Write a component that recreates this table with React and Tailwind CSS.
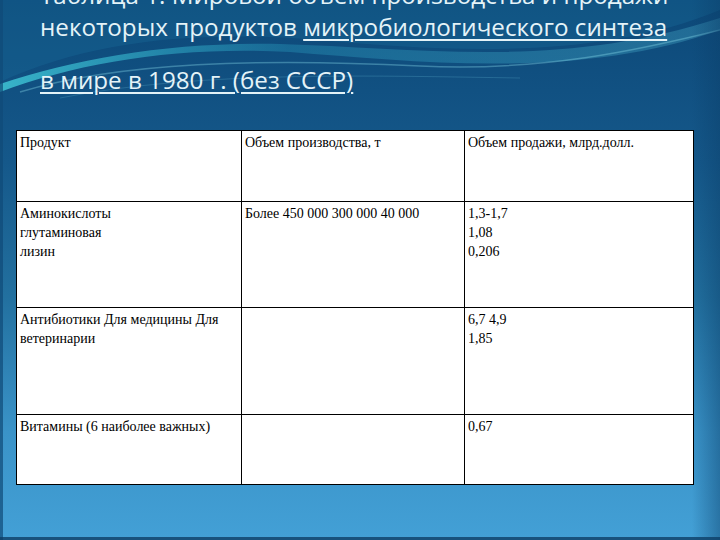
import React from "react";

function Cell({ children, className = "" }) {
  return (
    <td className={"border border-black align-top px-[3px] pt-[2px] text-[14px] leading-[19px] text-black " + className}>
      {children}
    </td>
  );
}

export default function App() {
  return (
    <div className="relative w-[720px] h-[540px] overflow-hidden bg-[linear-gradient(180deg,#0c4878_0%,#15588a_30%,#22709f_55%,#3a93c8_80%,#43a0d6_100%)]">
      <svg className="absolute inset-0 pointer-events-none" width="720" height="540" viewBox="0 0 720 540">
        <defs>
          <linearGradient id="w1" x1="0" y1="0" x2="1" y2="0">
            <stop offset="0" stopColor="#3fc6d6" stopOpacity="0.85" />
            <stop offset="0.4" stopColor="#2aa0c2" stopOpacity="0.35" />
            <stop offset="1" stopColor="#5fd0e6" stopOpacity="0.25" />
          </linearGradient>
          <linearGradient id="rs" x1="0" y1="0" x2="1" y2="0">
            <stop offset="0" stopColor="#0b3f6a" stopOpacity="0" />
            <stop offset="1" stopColor="#0b3f6a" stopOpacity="0.45" />
          </linearGradient>
        </defs>
        <path d="M0 82 C 90 40, 200 30, 320 40 C 450 52, 600 60, 720 10 L720 0 L0 0 Z" fill="#1a6d9c" opacity="0.35" />
        <path d="M0 84 C 80 58, 170 42, 280 44 C 420 48, 560 70, 720 18 L720 30 C 580 80, 420 62, 290 52 C 180 46, 80 62, 0 92 Z" fill="url(#w1)" />
        <path d="M20 92 C 120 62, 260 58, 420 66 C 540 72, 640 50, 720 30" stroke="#8fe3f0" strokeOpacity="0.35" strokeWidth="1.5" fill="none" />
        <path d="M60 98 C 200 70, 380 76, 520 78" stroke="#7fd6ea" strokeOpacity="0.2" strokeWidth="1" fill="none" />
        <rect x="692" y="0" width="28" height="540" fill="url(#rs)" />
        <rect x="0" y="0" width="3" height="540" fill="#104a78" opacity="0.7" />
        <rect x="0" y="537" width="720" height="3" fill="#0e3f66" opacity="0.8" />
      </svg>

      <div className="relative flex flex-col">
        <div className="mt-[-21px] pl-[40px] pr-[20px] text-[#e4f3f8] text-[24.2px] leading-[32px] font-['Open_Sans',sans-serif] whitespace-nowrap">
          <p>Таблица 1. Мировой объем производства и продажи</p>
          <p>
            некоторых продуктов{" "}
            <span className="underline decoration-2 underline-offset-[3px]">микробиологического синтеза</span>
          </p>
          <p className="mt-[21px] underline decoration-2 underline-offset-[3px]">в мире в 1980 г. (без СССР)</p>
        </div>

        <div className="mt-[34px] ml-[16px]">
          <table className="border-collapse bg-white w-[677px] table-fixed font-['Liberation_Serif',serif]">
            <colgroup>
              <col className="w-[225px]" />
              <col className="w-[223px]" />
              <col className="w-[229px]" />
            </colgroup>
            <tbody>
              <tr className="h-[71px]">
                <Cell>Продукт</Cell>
                <Cell>Объем производства, т</Cell>
                <Cell>Объем продажи, млрд.долл.</Cell>
              </tr>
              <tr className="h-[106px]">
                <Cell>
                  Аминокислоты
                  <br />
                  глутаминовая
                  <br />
                  лизин
                </Cell>
                <Cell>Более 450 000 300 000 40 000</Cell>
                <Cell>
                  1,3-1,7
                  <br />
                  1,08
                  <br />
                  0,206
                </Cell>
              </tr>
              <tr className="h-[107px]">
                <Cell>Антибиотики Для медицины Для ветеринарии</Cell>
                <Cell />
                <Cell>
                  6,7 4,9
                  <br />
                  1,85
                </Cell>
              </tr>
              <tr className="h-[70px]">
                <Cell>Витамины (6 наиболее важных)</Cell>
                <Cell />
                <Cell>0,67</Cell>
              </tr>
            </tbody>
          </table>
        </div>
      </div>
    </div>
  );
}
